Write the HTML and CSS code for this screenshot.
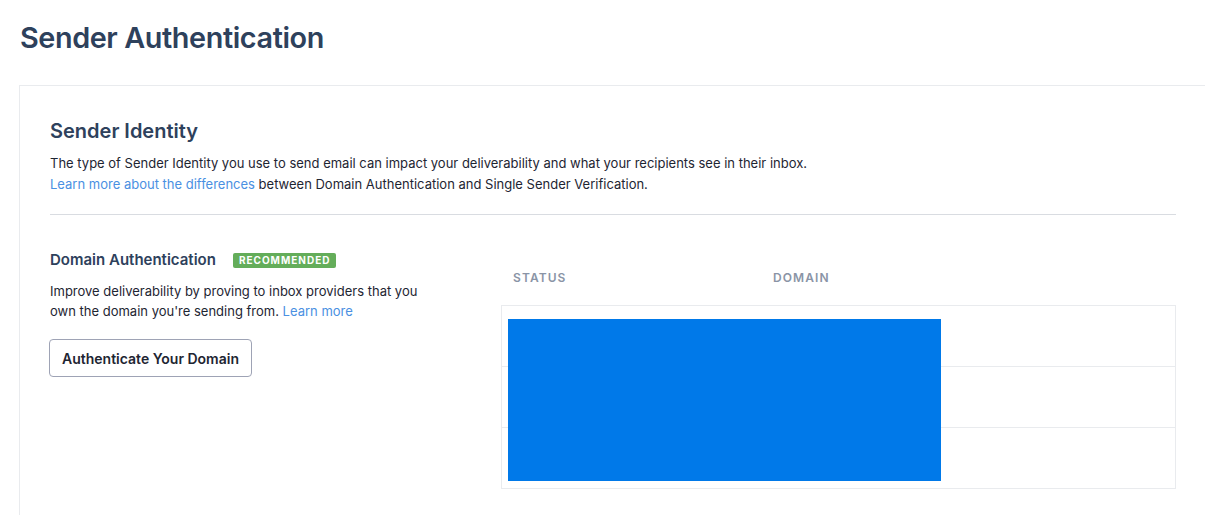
FILE: index.html
```html
<!DOCTYPE html>
<html lang="en">
<head>
<meta charset="utf-8">
<title>Sender Authentication</title>
<link rel="stylesheet" href="styles.css">
</head>
<body>
<div class="page">
  <h1 class="page-title">Sender Authentication</h1>
  <section class="card">
    <h2 class="card-title">Sender Identity</h2>
    <p class="intro">The type of Sender Identity you use to send email can impact your deliverability and what your recipients see in their inbox.<br><a href="#" class="link">Learn more about the differences</a> between Domain Authentication and Single Sender Verification.</p>
    <hr class="divider">
    <div class="auth-row">
      <div class="auth-info">
        <div class="auth-head">
          <h3 class="auth-title">Domain Authentication</h3>
          <span class="badge">RECOMMENDED</span>
        </div>
        <p class="auth-desc">Improve deliverability by proving to inbox providers that you own the domain you're sending from. <a href="#" class="link">Learn more</a></p>
        <button class="btn">Authenticate Your Domain</button>
      </div>
      <div class="auth-table">
        <div class="table-head">
          <span class="col-status">STATUS</span>
          <span class="col-domain">DOMAIN</span>
        </div>
        <div class="table-body">
          <div class="table-row"></div>
          <div class="table-row"></div>
          <div class="table-row"></div>
          <div class="redact"></div>
        </div>
      </div>
    </div>
  </section>
</div>
</body>
</html>
```

FILE: styles.css
```css
* { box-sizing: border-box; }
html, body { margin: 0; padding: 0; background: #fff; overflow: hidden; }
body {
  font-family: Inter, "Noto Sans", "Liberation Sans", sans-serif;
  color: #1e2532;
}
.page {
  padding: 18px 0 0 19px;
}
.page-title {
  margin: 0 0 0 1px;
  font-size: 28.8px;
  line-height: 40px;
  font-weight: 600;
  color: #2e415c;
  letter-spacing: -0.4px;
}
.card {
  margin-top: 27px;
  width: 1186px;
  border: 1px solid #e9ebee;
  border-right: none;
  padding: 31px 29px 40px 30px;
}
.card-title {
  margin: 0;
  font-size: 20px;
  line-height: 28px;
  font-weight: 600;
  color: #2e415c;
}
.intro {
  margin: 8px 0 0;
  font-size: 13px;
  line-height: 21px;
}
.link { color: #4a90e2; text-decoration: none; }
.divider {
  margin: 19px 0 0;
  border: none;
  border-top: 1px solid #d9dce1;
  height: 0;
}
.auth-row {
  display: flex;
  padding-top: 34px;
}
.auth-info {
  width: 451px;
  flex: none;
}
.auth-head {
  display: flex;
  align-items: center;
  gap: 17px;
  padding-top: 1px;
}
.auth-title {
  margin: 0;
  font-size: 15px;
  line-height: 20px;
  font-weight: 600;
  color: #2e415c;
}
.badge {
  display: inline-block;
  background: #64ad5a;
  color: #fff;
  font-size: 10px;
  font-weight: 700;
  letter-spacing: 1px;
  line-height: 15px;
  padding: 0 6px;
  border-radius: 2px;
}
.auth-desc {
  margin: 11px 0 0;
  font-size: 13px;
  line-height: 20px;
  width: 380px;
}
.btn {
  display: block;
  margin-top: 18px;
  margin-left: -1px;
  width: 203px;
  height: 38px;
  background: #fff;
  border: 1px solid #9ea3b5;
  border-radius: 4px;
  font-family: inherit;
  font-size: 14px;
  font-weight: 600;
  color: #1e2532;
  padding: 0;
}
.auth-table {
  flex: 1;
  padding-top: 10px;
}
.table-head {
  display: flex;
  font-size: 12px;
  font-weight: 600;
  letter-spacing: 1.1px;
  color: #8a94a6;
  line-height: 20px;
  padding: 9px 0 17px 12px;
}
.col-status { width: 260px; }
.table-body {
  position: relative;
  border: 1px solid #e9ebee;
}
.table-row {
  height: 61px;
  border-top: 1px solid #e9ebee;
}
.table-row:first-child { border-top: none; height: 60px; }
.redact {
  position: absolute;
  left: 6px;
  top: 13px;
  width: 433px;
  height: 162px;
  background: #0079e9;
}
```
